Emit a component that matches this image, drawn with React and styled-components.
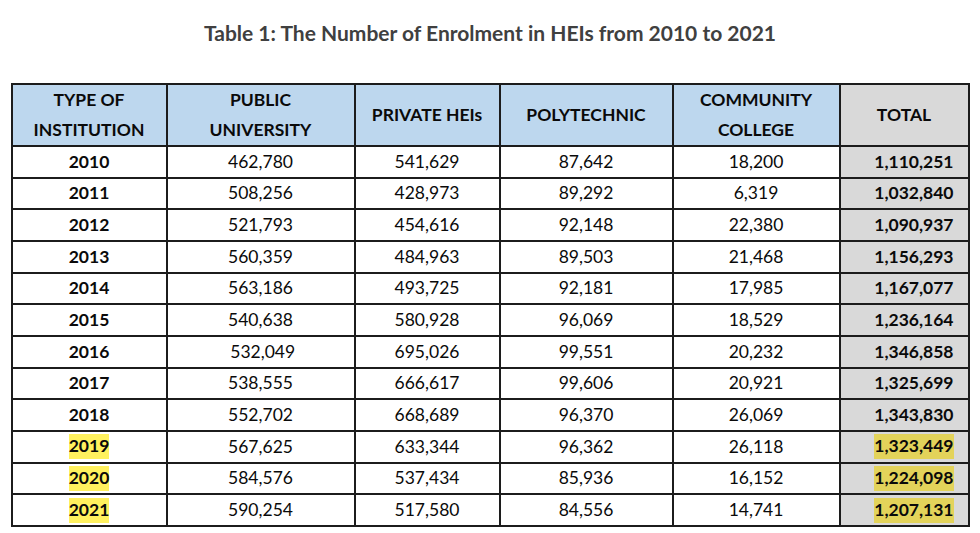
import React from 'react';
import styled, {createGlobalStyle} from "styled-components";

const GlobalStyle = createGlobalStyle`
  html, body {
    margin: 0;
    padding: 0;
    background: #ffffff;
  }
  body {
    font-family: Lato, "Open Sans", "Liberation Sans", sans-serif;
  }
`

const Page = styled.div`
  width: 980px;
  height: 533px;
  display: flex;
  flex-direction: column;
  align-items: center;
  overflow: hidden;
`

const Title = styled.h1`
  margin: 0;
  padding-top: 19px;
  height: 83px;
  box-sizing: border-box;
  font-size: 21px;
  line-height: 28px;
  font-weight: 700;
  color: #404040;
  text-align: center;
`

const Table = styled.table`
  width: 957px;
  border-collapse: collapse;
  border: 2px solid #1c1c1c;
  table-layout: fixed;
  color: #0a0a0a;
`

const HeadCell = styled.th`
  height: 58px;
  padding: 0 4px;
  border: 2px solid #1c1c1c;
  background: ${p => p.$total ? '#d9d9d9' : '#bdd7ee'};
  font-size: 17.5px;
  line-height: 30px;
  font-weight: 700;
  text-align: center;
  vertical-align: middle;
`

const Row = styled.tr`
  height: 31.67px;
`

const Cell = styled.td`
  padding: ${p => p.$kind === 'total' ? '0 14px 0 4px' : '0 4px'};
  border: 2px solid #1c1c1c;
  background: ${p => p.$kind === 'total' ? '#d9d9d9' : '#ffffff'};
  font-size: 17.5px;
  line-height: 22px;
  font-weight: ${p => p.$kind === 'number' ? 400 : 700};
  text-align: ${p => p.$kind === 'total' ? 'right' : 'center'};
  white-space: pre;
`

const Mark = styled.span`
  display: inline-block;
  padding: 1px 0 2px;
  background: ${p => p.$onGray ? '#e3d35a' : '#fff15e'};
`

const columns = [
    {label: ['TYPE OF', 'INSTITUTION'], width: 155},
    {label: ['PUBLIC', 'UNIVERSITY'], width: 188},
    {label: ['PRIVATE HEIs'], width: 145},
    {label: ['POLYTECHNIC'], width: 173},
    {label: ['COMMUNITY', 'COLLEGE'], width: 167},
    {label: ['TOTAL'], width: 129, total: true},
]

const rows = [
    ['2010', '462,780', '541,629', '87,642', '18,200', '1,110,251'],
    ['2011', '508,256', '428,973', '89,292', '6,319', '1,032,840'],
    ['2012', '521,793', '454,616', '92,148', '22,380', '1,090,937'],
    ['2013', '560,359', '484,963', '89,503', '21,468', '1,156,293'],
    ['2014', '563,186', '493,725', '92,181', '17,985', '1,167,077'],
    ['2015', '540,638', '580,928', '96,069', '18,529', '1,236,164'],
    ['2016', ' 532,049', '695,026', '99,551', '20,232', '1,346,858'],
    ['2017', '538,555', '666,617', '99,606', '20,921', '1,325,699'],
    ['2018', '552,702', '668,689', '96,370', '26,069', '1,343,830'],
    ['2019', '567,625', '633,344', '96,362', '26,118', '1,323,449', true],
    ['2020', '584,576', '537,434', '85,936', '16,152', '1,224,098', true],
    ['2021', '590,254', '517,580', '84,556', '14,741', '1,207,131', true],
]

function App() {
    return (
        <Page>
            <GlobalStyle/>
            <Title>Table 1: The Number of Enrolment in HEIs from 2010 to 2021</Title>
            <Table>
                <colgroup>
                    {columns.map((c, i) => <col key={i} style={{width: c.width}}/>)}
                </colgroup>
                <thead>
                <tr>
                    {columns.map((c, i) => (
                        <HeadCell key={i} $total={c.total}>
                            {c.label.map((line, j) => <div key={j}>{line}</div>)}
                        </HeadCell>
                    ))}
                </tr>
                </thead>
                <tbody>
                {rows.map((r) => {
                    const [year, pub, priv, poly, comm, total, marked] = r
                    return (
                        <Row key={year}>
                            <Cell $kind="year">{marked ? <Mark>{year}</Mark> : year}</Cell>
                            <Cell $kind="number">{pub}</Cell>
                            <Cell $kind="number">{priv}</Cell>
                            <Cell $kind="number">{poly}</Cell>
                            <Cell $kind="number">{comm}</Cell>
                            <Cell $kind="total">{marked ? <Mark $onGray>{total}</Mark> : total}</Cell>
                        </Row>
                    )
                })}
                </tbody>
            </Table>
        </Page>
    );
}

export default App;
